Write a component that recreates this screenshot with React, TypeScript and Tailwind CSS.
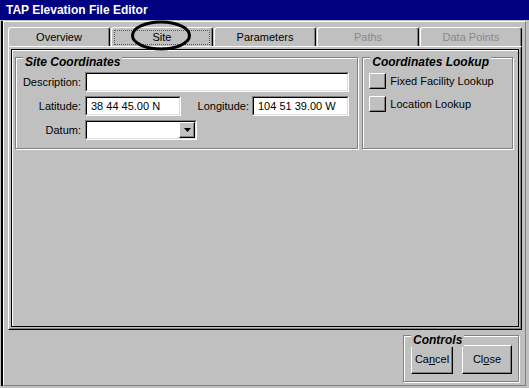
import type { ReactNode } from 'react';

const FONT = { fontFamily: '"Liberation Sans", Arial, sans-serif' };

function Tab({ label, disabled, focused }: { label: string; disabled?: boolean; focused?: boolean }) {
  return (
    <div className="relative w-[102px] h-[19px] border-l border-t border-r border-l-white border-t-white border-r-black rounded-t-[3px] shadow-[inset_-1px_0_0_#808080] flex items-center justify-center">
      <span className={disabled ? 'text-[#8a8a8a]' : 'text-black'}>{label}</span>
      {focused && (
        <div className="absolute left-[2px] right-[2px] top-[2px] bottom-[1px] border border-dotted border-[#555]" />
      )}
    </div>
  );
}

function GroupBox({ title, className, children }: { title: string; className: string; children?: ReactNode }) {
  return (
    <div className={`relative border border-[#808080] shadow-[inset_1px_1px_0_#fff,1px_1px_0_#fff] ${className}`}>
      <span className="absolute left-[7px] top-[-3px] px-[2px] bg-[#c0c0c0] text-[12px] leading-[14px] font-bold italic">
        {title}
      </span>
      {children}
    </div>
  );
}

function Sunken({ className, children }: { className: string; children?: ReactNode }) {
  return (
    <div className={`border border-t-[#808080] border-l-[#808080] border-r-white border-b-white ${className}`}>
      <div className="h-full border border-t-black border-l-black border-r-[#dfdfdf] border-b-[#dfdfdf] bg-white flex items-center pl-[4px]">
        {children}
      </div>
    </div>
  );
}

function Raised({ className, children }: { className: string; children?: ReactNode }) {
  return (
    <div className={`border border-t-white border-l-white border-r-black border-b-black shadow-[inset_-1px_-1px_0_#808080] flex items-center justify-center ${className}`}>
      {children}
    </div>
  );
}

export default function App() {
  return (
    <div className="w-[529px] h-[388px] bg-[#c0c0c0] flex flex-col overflow-hidden relative text-[11px] leading-[13px] text-black" style={FONT}>
      {/* Title bar */}
      <div className="h-[20px] bg-[#000080] flex items-center pl-[6px] text-white font-bold text-[12px]">
        TAP Elevation File Editor
      </div>

      {/* Window frame */}
      <div className="flex-1 flex flex-col mx-[3px] mt-[1px] mb-[2px] border border-l-white border-t-white border-r-[#808080] border-b-[#808080] shadow-[-2px_0_0_#000]">
        {/* Tabs */}
        <div className="flex gap-[1px] pl-[4px] pt-[5px]">
          <Tab label="Overview" />
          <Tab label="Site" focused />
          <Tab label="Parameters" />
          <Tab label="Paths" disabled />
          <Tab label="Data Points" disabled />
        </div>

        {/* Page */}
        <div className="ml-[4px] w-[514px] h-[284px] border border-l-white border-t-white border-r-black border-b-black">
          <div className="h-full border border-l-[#c0c0c0] border-t-[#c0c0c0] border-r-[#808080] border-b-[#808080] p-[1px]">
            <div className="h-full border border-black shadow-[inset_1px_1px_0_#fff] flex gap-[4px] pl-[3px] pr-[5px] pt-[7px]">
              <GroupBox title="Site Coordinates" className="w-[344px] h-[92px] pt-[14px] pl-[4px]">
                <div className="flex flex-col gap-[4px]">
                  <div className="flex items-center h-[20px]">
                    <span className="w-[65px] text-right pr-[4px]">Description:</span>
                    <Sunken className="w-[264px] h-[20px]" />
                  </div>
                  <div className="flex items-center h-[20px]">
                    <span className="w-[65px] text-right pr-[4px]">Latitude:</span>
                    <Sunken className="w-[96px] h-[20px]">38 44 45.00 N</Sunken>
                    <span className="w-[71px] text-right pr-[3px]">Longitude:</span>
                    <Sunken className="w-[97px] h-[20px]">104 51 39.00 W</Sunken>
                  </div>
                  <div className="flex items-center h-[20px]">
                    <span className="w-[65px] text-right pr-[4px]">Datum:</span>
                    <div className="w-[112px] h-[20px] border border-t-[#808080] border-l-[#808080] border-r-white border-b-white">
                      <div className="h-full border border-t-black border-l-black border-r-[#dfdfdf] border-b-[#dfdfdf] bg-white flex justify-end">
                        <Raised className="w-[16px] h-[16px] bg-[#c0c0c0]">
                          <svg width="7" height="4" viewBox="0 0 7 4">
                            <path d="M0 0h7L3.5 4z" fill="#000" />
                          </svg>
                        </Raised>
                      </div>
                    </div>
                  </div>
                </div>
              </GroupBox>

              <GroupBox title="Coordinates Lookup" className="w-[151px] h-[92px] pt-[15px] pl-[6px]">
                <div className="flex flex-col gap-[7px]">
                  <div className="flex items-center gap-[4px]">
                    <Raised className="w-[17px] h-[16px]" />
                    <span>Fixed Facility Lookup</span>
                  </div>
                  <div className="flex items-center gap-[4px]">
                    <Raised className="w-[17px] h-[16px]" />
                    <span>Location Lookup</span>
                  </div>
                </div>
              </GroupBox>
            </div>
          </div>
        </div>

        {/* Bottom controls */}
        <div className="flex justify-end pr-[6px] pt-[5px]">
          <GroupBox title="Controls" className="w-[116px] h-[47px] pt-[9px] pl-[7px]">
            <div className="flex gap-[9px]">
              <Raised className="w-[42px] h-[29px]">
                <span>
                  Ca<span className="underline">n</span>cel
                </span>
              </Raised>
              <Raised className="w-[50px] h-[29px]">
                <span>
                  Cl<span className="underline">o</span>se
                </span>
              </Raised>
            </div>
          </GroupBox>
        </div>
      </div>

      {/* Hand-drawn annotation circle around the Site tab */}
      <svg className="absolute left-[130px] top-[20px]" width="62" height="31" viewBox="0 0 62 31">
        <ellipse cx="31" cy="15.5" rx="28.5" ry="13.5" fill="none" stroke="#000" strokeWidth="3" />
      </svg>
    </div>
  );
}
